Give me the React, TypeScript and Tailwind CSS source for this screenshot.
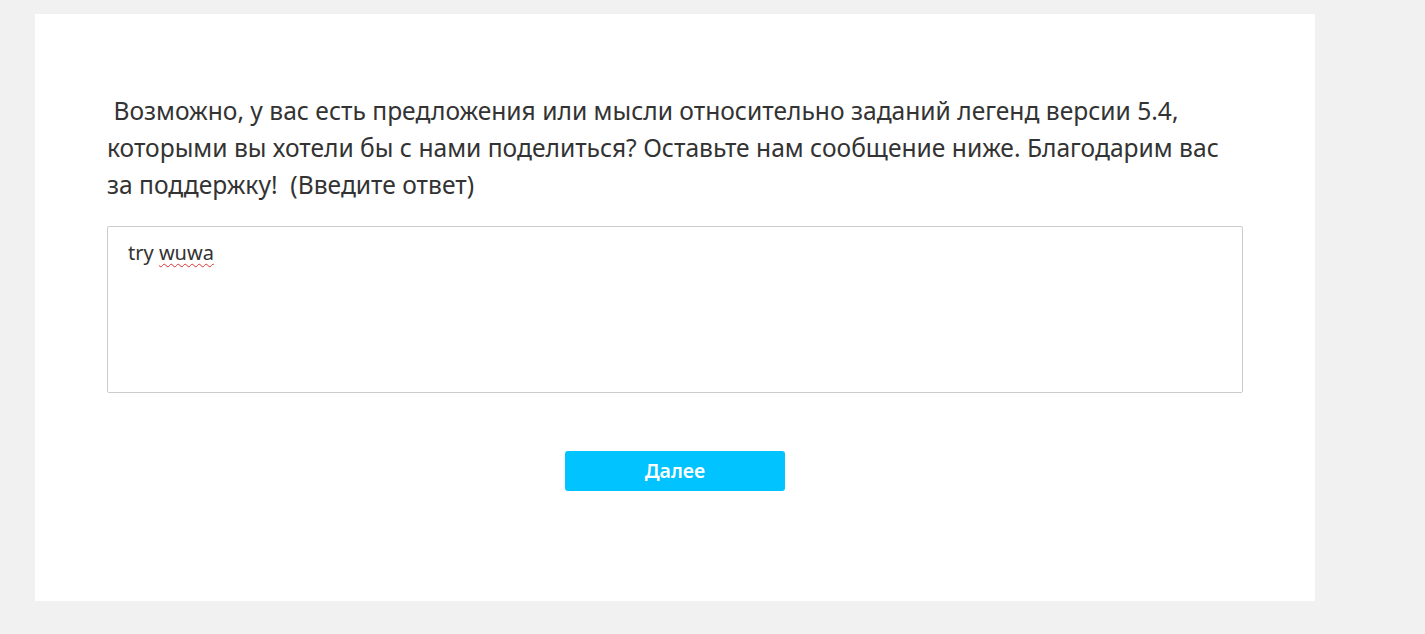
import React from "react";

export default function App() {
  return (
    <div className="min-h-[634px] w-full bg-[#f1f1f1] pt-[14px] pl-[35px]" style={{ fontFamily: '"Segoe UI", "Noto Sans", "Open Sans", sans-serif' }}>
      <div className="w-[1280px] h-[587px] bg-white px-[72px] pt-[78px]">
        <p className="text-[24.6px] leading-[37px] text-[#333333] whitespace-pre-wrap">
          {" Возможно, у вас есть предложения или мысли относительно заданий легенд версии 5.4, которыми вы хотели бы с нами поделиться? Оставьте нам сообщение ниже. Благодарим вас за поддержку!  (Введите ответ)"}
        </p>
        <div className="mt-[23px] h-[167px] w-full border border-[#cccccc] rounded-[2px] px-[20px] pt-[11px] text-[20px] text-[#333333]">
          try <span className="underline decoration-wavy decoration-[#d33] decoration-1 underline-offset-[3px]">wuwa</span>
        </div>
        <div className="flex justify-center mt-[58px]">
          <button className="w-[220px] h-[40px] bg-[#00c3ff] rounded-[3px] text-white text-[19.5px] font-semibold">
            Далее
          </button>
        </div>
      </div>
    </div>
  );
}
